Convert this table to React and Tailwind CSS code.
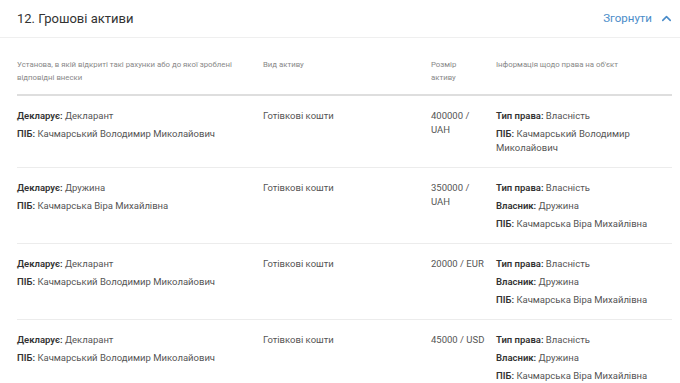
import { ChevronUp } from "lucide-react";

const rows = [
  {
    who: [
      ["Декларує:", "Декларант"],
      ["ПІБ:", "Качмарський Володимир Миколайович"],
    ],
    kind: "Готівкові кошти",
    size: "400000 / UAH",
    info: [
      ["Тип права:", "Власність"],
      ["ПІБ:", "Качмарський Володимир Миколайович"],
    ],
  },
  {
    who: [
      ["Декларує:", "Дружина"],
      ["ПІБ:", "Качмарська Віра Михайлівна"],
    ],
    kind: "Готівкові кошти",
    size: "350000 / UAH",
    info: [
      ["Тип права:", "Власність"],
      ["Власник:", "Дружина"],
      ["ПІБ:", "Качмарська Віра Михайлівна"],
    ],
  },
  {
    who: [
      ["Декларує:", "Декларант"],
      ["ПІБ:", "Качмарський Володимир Миколайович"],
    ],
    kind: "Готівкові кошти",
    size: "20000 / EUR",
    info: [
      ["Тип права:", "Власність"],
      ["Власник:", "Дружина"],
      ["ПІБ:", "Качмарська Віра Михайлівна"],
    ],
  },
  {
    who: [
      ["Декларує:", "Декларант"],
      ["ПІБ:", "Качмарський Володимир Миколайович"],
    ],
    kind: "Готівкові кошти",
    size: "45000 / USD",
    info: [
      ["Тип права:", "Власність"],
      ["Власник:", "Дружина"],
      ["ПІБ:", "Качмарська Віра Михайлівна"],
    ],
  },
];

function Field({ label, value }) {
  return (
    <div>
      <span className="font-semibold text-[#333]">{label}</span> {value}
    </div>
  );
}

export default function App() {
  return (
    <div className="h-[383px] w-[680px] overflow-hidden bg-white font-['Roboto',sans-serif]">
      {/* Section header */}
      <div className="flex h-[38px] items-center justify-between border-b border-[#efefef] pl-[17px] pr-[6px]">
        <div className="text-[13px] text-[#333]">12. Грошові активи</div>
        <div className="flex items-center gap-[7px] text-[11.5px] text-[#4a8cc9]">
          Згорнути
          <ChevronUp className="h-[15px] w-[15px]" strokeWidth={2.5} />
        </div>
      </div>

      {/* Table */}
      <div className="ml-[17px] mr-[8px]">
        <div className="grid grid-cols-[246px_168px_65px_1fr] border-b-2 border-[#dedede] pt-[20px] pb-[10px] text-[7.8px] leading-[13px] text-[#888]">
          <div className="pr-[20px]">
            Установа, в якій відкриті такі рахунки або до якої зроблені відповідні внески
          </div>
          <div>Вид активу</div>
          <div className="pr-[20px]">Розмір активу</div>
          <div>Інформація щодо права на об'єкт</div>
        </div>

        {rows.map((r, i) => (
          <div
            key={i}
            className="grid grid-cols-[246px_168px_65px_1fr] border-b border-[#ececec] pt-[13px] pb-[12px] text-[9.5px] leading-[14px] text-[#555]"
          >
            <div className="flex flex-col gap-[4px]">
              {r.who.map(([l, v]) => (
                <Field key={l} label={l} value={v} />
              ))}
            </div>
            <div>{r.kind}</div>
            <div className="pr-[8px]">{r.size}</div>
            <div className="flex flex-col gap-[4px]">
              {r.info.map(([l, v]) => (
                <Field key={l} label={l} value={v} />
              ))}
            </div>
          </div>
        ))}
      </div>
    </div>
  );
}
